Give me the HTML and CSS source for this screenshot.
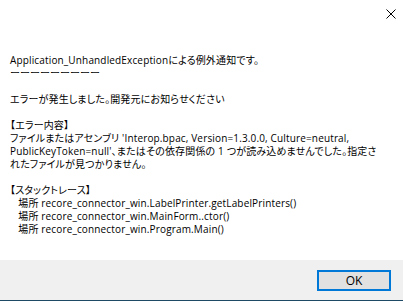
FILE: index.html
```html
<!doctype html>
<html>
<head>
  <meta charset="UTF-8">
  <title>例外通知</title>
  <link rel="stylesheet" href="styles.css">
</head>
<body>
  <div class="dialog">
    <div class="titlebar">
      <div class="close">
        <svg width="10" height="10" viewBox="0 0 10 10"><path d="M0.5 0.5 L9.5 9.5 M9.5 0.5 L0.5 9.5" stroke="#000" stroke-width="1" fill="none"/></svg>
      </div>
    </div>
    <div class="message">Application_UnhandledExceptionによる例外通知です。
ーーーーーーーーー

エラーが発生しました。開発元にお知らせください

【エラー内容】
ファイルまたはアセンブリ 'Interop.bpac, Version=1.3.0.0, Culture=neutral,
PublicKeyToken=null'、またはその依存関係の 1 つが読み込めませんでした。指定さ
れたファイルが見つかりません。

【スタックトレース】
   場所 recore_connector_win.LabelPrinter.getLabelPrinters()
   場所 recore_connector_win.MainForm..ctor()
   場所 recore_connector_win.Program.Main()</div>
    <div class="footer">
      <button class="ok">OK</button>
    </div>
  </div>
</body>
</html>
```

FILE: styles.css
```css
*{margin:0;
  padding:0;}
body{background:#fff;
     font-family:"Open Sans","Noto Sans CJK JP",sans-serif;
     color:#000;}
.dialog{width:403px;
        height:301px;
        display:flex;
        flex-direction:column;
        overflow:hidden;}
.titlebar{height:28px;
          display:flex;
          justify-content:flex-end;
          align-items:center;}
.close{width:24px;
       height:28px;
       display:flex;
       align-items:center;
       justify-content:center;}
.close svg{display:block;}
.message{flex:1;
         padding:26px 0 0 10px;
         font-size:10px;
         line-height:13px;
         white-space:pre;
         letter-spacing:0.15px;
         font-feature-settings:"palt";}
.footer{height:41px;
        background:#f0f0f0;
        border-bottom:1px solid #1f4a66;
        display:flex;
        justify-content:flex-end;
        align-items:flex-start;
        padding:10px 12px 0 0;
        box-sizing:border-box;}
.ok{width:74px;
    height:21px;
    border:2px solid #0078d7;
    background:#e1e1e1;
    font-family:"Open Sans",sans-serif;
    font-size:12px;
    color:#000;}
```
